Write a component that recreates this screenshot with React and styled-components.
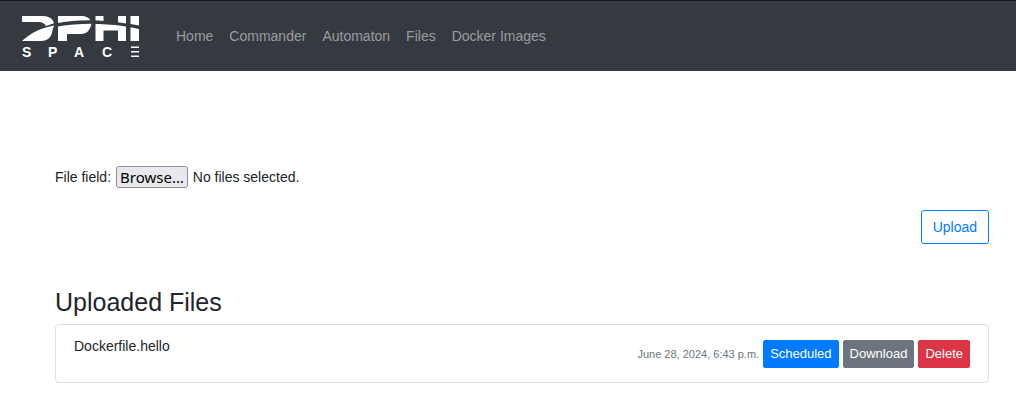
import React, { useRef, useState } from "react";
import styled, { createGlobalStyle, css } from "styled-components";

const GlobalStyle = createGlobalStyle`
  *, *::before, *::after { box-sizing: border-box; }
  body {
    margin: 0;
    background: #fff;
    color: #212529;
    font: 14px/22px "Liberation Sans", Arial, sans-serif;
  }
`;

const Navbar = styled.header`
  display: flex;
  align-items: center;
  min-height: 71px;
  padding: 8px 22px;
  border-top: 1px solid #17191c;
  background: #343a40;
`;

const Brand = styled.a`
  display: flex;
  margin-right: 28px;
  color: #fff;
`;

const NavLinks = styled.nav`
  display: flex;
`;

const NavLink = styled.a`
  padding: 8px;
  color: rgba(255, 255, 255, 0.5);
  text-decoration: none;
  &:hover { color: rgba(255, 255, 255, 0.75); }
`;

const Main = styled.main`
  padding: 95px 27px 32px 55px;
`;

const UploadForm = styled.form`
  display: flex;
  flex-direction: column;
`;

const FileField = styled.div`
  display: flex;
  align-items: center;
  gap: 5px;
`;

const HiddenFileInput = styled.input`
  position: absolute;
  width: 1px;
  height: 1px;
  overflow: hidden;
  opacity: 0;
`;

const BrowseButton = styled.button`
  height: 22px;
  padding: 0 3px;
  border: 1px solid #8f8f9d;
  border-radius: 3px;
  background: #e9e9ed;
  color: #000;
  font: 15px/18px "Noto Sans", sans-serif;
`;

const tones = {
  outline: css`border-color: #007bff; color: #007bff; background: transparent;`,
  primary: css`border-color: #007bff; color: #fff; background: #007bff;`,
  secondary: css`border-color: #6c757d; color: #fff; background: #6c757d;`,
  danger: css`border-color: #dc3545; color: #fff; background: #dc3545;`,
};

const Button = styled.button`
  padding: ${(p) => (p.$small ? "3px 6px" : "5px 11px")};
  border: 1px solid;
  border-radius: ${(p) => (p.$small ? "2px" : "3px")};
  font: ${(p) => (p.$small ? "13px/20px" : "14px/22px")} "Liberation Sans", Arial, sans-serif;
  cursor: pointer;
  ${(p) => tones[p.$tone]}
`;

const FormActions = styled.div`
  display: flex;
  justify-content: flex-end;
  margin-top: 22px;
`;

const Heading = styled.h1`
  margin: 43px 0 7px;
  font-size: 25px;
  line-height: 30px;
  font-weight: 400;
`;

const FileList = styled.ul`
  margin: 0;
  padding: 0;
  border: 1px solid #dfdfdf;
  border-radius: 4px;
  list-style: none;
`;

const FileRow = styled.li`
  display: flex;
  justify-content: space-between;
  padding: 10px 18px 14px;
`;

const FileActions = styled.div`
  display: flex;
  align-items: center;
  gap: 4px;
  padding-top: 5px;
`;

const Timestamp = styled.time`
  color: #6c757d;
  font-size: 11px;
`;

const LogoImage = styled.svg`
  display: block;
  overflow: visible;
`;

const LogoText = styled.text`
  font: 700 14px "Liberation Sans", Arial, sans-serif;
`;

function Logo() {
  return (
    <LogoImage width="118" height="50" viewBox="0 -4 118 50" role="img" aria-label="DPHI Space" fill="currentColor">
      <path d="M0 1H21C27 1 31 4 32 8.300L24 11C22 8 20 7 17 7H0Z" />
      <path d="M0 26C9 18 19 12.500 32.500 10.500L31 13C30 21 27 26 19 26Z" />
      <path d="M36 1H59C64 1 67 3 68.500 5.200C57 5 47 6 36 8Z" />
      <path d="M36 11.500C46 9.500 58 8.700 69.500 8.700C68 15 65 19 59 19H45V26H36Z" />
      <path d="M73.500 1H81.500V6L73.500 5.300ZM96 1H104V8.500L96 7.200ZM108.500 1H117V10.500L108.500 9Z" />
      <path d="M73.500 9C82 9 96 10 104 11.500V26H96V15.500H81.500V26H73.500ZM108.500 12.300L117 14V26H108.500Z" />
      <LogoText x="0" y="42">S</LogoText>
      <LogoText x="26" y="42">P</LogoText>
      <LogoText x="52" y="42">A</LogoText>
      <LogoText x="80" y="42">C</LogoText>
      <path d="M109 31.500H117V33H109ZM109 36H117V37.500H109ZM109 40.500H117V42H109Z" />
    </LogoImage>
  );
}

const links = ["Home", "Commander", "Automaton", "Files", "Docker Images"];

export default function App() {
  const input = useRef(null);
  const [chosen, setChosen] = useState("");
  return (
    <>
      <GlobalStyle />
      <Navbar>
        <Brand href="#home"><Logo /></Brand>
        <NavLinks>
          {links.map((name) => (
            <NavLink key={name} href={`#${name.toLowerCase().replace(" ", "-")}`}>{name}</NavLink>
          ))}
        </NavLinks>
      </Navbar>
      <Main>
        <UploadForm onSubmit={(e) => e.preventDefault()}>
          <FileField>
            <label htmlFor="file-field">File field:</label>
            <HiddenFileInput
              id="file-field"
              type="file"
              multiple
              tabIndex={-1}
              ref={input}
              onChange={(e) => setChosen(Array.from(e.target.files, (f) => f.name).join(", "))}
            />
            <BrowseButton type="button" onClick={() => input.current.click()}>Browse…</BrowseButton>
            <span>{chosen || "No files selected."}</span>
          </FileField>
          <FormActions>
            <Button type="submit" $tone="outline">Upload</Button>
          </FormActions>
        </UploadForm>
        <Heading>Uploaded Files</Heading>
        <FileList>
          <FileRow>
            <span>Dockerfile.hello</span>
            <FileActions>
              <Timestamp dateTime="2024-06-28T18:43">June 28, 2024, 6:43 p.m.</Timestamp>
              <Button type="button" $small $tone="primary">Scheduled</Button>
              <Button type="button" $small $tone="secondary">Download</Button>
              <Button type="button" $small $tone="danger">Delete</Button>
            </FileActions>
          </FileRow>
        </FileList>
      </Main>
    </>
  );
}
